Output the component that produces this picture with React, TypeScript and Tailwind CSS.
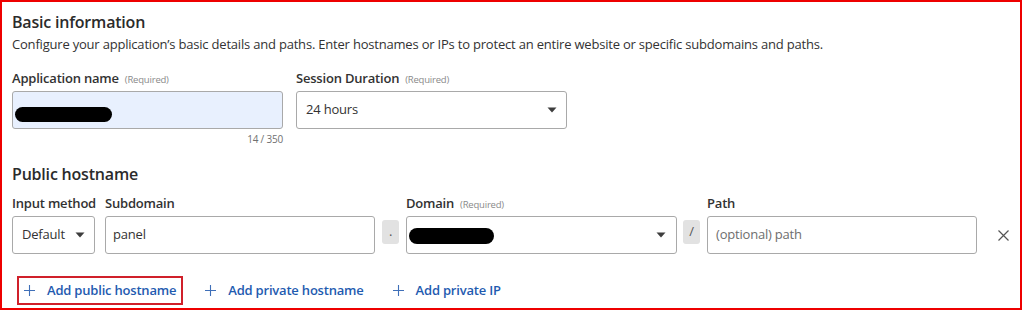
import React from "react";

const Caret = () => (
  <svg width="10" height="6" viewBox="0 0 10 6" className="shrink-0">
    <path d="M0.5 0.5 H9.5 L5 5.5 Z" fill="#3d3d3d" />
  </svg>
);

const Plus = () => (
  <svg width="11" height="11" viewBox="0 0 11 11" className="shrink-0">
    <path d="M5.5 0 V11 M0 5.5 H11" stroke="#3f6fb8" strokeWidth="1.1" />
  </svg>
);

const Label = ({ text, required }: { text: string; required?: boolean }) => (
  <div className="flex h-[22px] items-baseline gap-[6px] whitespace-nowrap text-[13px] font-semibold text-[#323232]">
    <span>{text}</span>
    {required && <span className="text-[9.5px] font-normal text-[#8a8a8a]">(Required)</span>}
  </div>
);

const Redacted = ({ w, h }: { w: number; h: number }) => (
  <div className="rounded-full bg-black" style={{ width: w, height: h }} />
);

const Joiner = ({ ch }: { ch: string }) => (
  <div className="mb-[10px] flex h-[24px] w-[17px] items-center justify-center rounded-[3px] bg-[#e2e2e2] text-[13px] text-[#555]">
    {ch}
  </div>
);

const AddLink = ({ text, boxed }: { text: string; boxed?: boolean }) => (
  <div
    className={
      boxed
        ? "flex h-[29px] items-center gap-[12px] border-2 border-[#d0202a] px-[5px]"
        : "flex h-[29px] items-center gap-[12px] px-[7px]"
    }
  >
    <Plus />
    <span className="text-[13px] font-semibold text-[#1f5bb0]">{text}</span>
  </div>
);

export default function App() {
  return (
    <div
      className="h-[311px] w-[1024px] bg-white tracking-[-0.2px]"
      style={{ fontFamily: '"Open Sans", "Noto Sans", sans-serif' }}
    >
      <div className="h-[310px] w-[1022px] border-2 border-[#ee0000] px-[10px] pt-[8px]">
        <h2 className="text-[16px] font-semibold leading-[24px] text-[#2b2b2b]">Basic information</h2>
        <p className="mt-[1px] text-[13px] leading-[18px] text-[#333]">
          Configure your application’s basic details and paths. Enter hostnames or IPs to protect an entire website or specific subdomains and paths.
        </p>

        <div className="mt-[16px] flex gap-[13px]">
          <div className="w-[271px]">
            <Label text="Application name" required />
            <div className="flex h-[38px] items-center rounded-[3px] border border-[#a9a9a9] bg-[#e8f0fe] px-[2px] pt-[8px]">
              <Redacted w={97} h={15} />
            </div>
            <div className="mt-[3px] text-right text-[10px] text-[#707070]">14 / 350</div>
          </div>
          <div className="w-[271px]">
            <Label text="Session Duration" required />
            <div className="flex h-[38px] items-center justify-between rounded-[3px] border border-[#a9a9a9] bg-white pl-[9px] pr-[9px]">
              <span className="text-[13px] text-[#333]">24 hours</span>
              <Caret />
            </div>
          </div>
        </div>

        <h2 className="mt-[15px] text-[16px] font-semibold leading-[24px] text-[#2b2b2b]">Public hostname</h2>

        <div className="mt-[8px] flex items-end">
          <div className="w-[83px] shrink-0">
            <Label text="Input method" />
            <div className="flex h-[38px] items-center justify-between rounded-[3px] border border-[#a9a9a9] pl-[9px] pr-[9px]">
              <span className="text-[13px] text-[#333]">Default</span>
              <Caret />
            </div>
          </div>
          <div className="ml-[10px] w-[270px] shrink-0">
            <Label text="Subdomain" />
            <div className="flex h-[38px] items-center rounded-[3px] border border-[#a9a9a9] px-[7px]">
              <span className="text-[13px] text-[#333]">panel</span>
            </div>
          </div>
          <div className="ml-[7px] shrink-0">
            <Joiner ch="." />
          </div>
          <div className="ml-[7px] w-[271px] shrink-0">
            <Label text="Domain" required />
            <div className="flex h-[38px] items-center justify-between rounded-[3px] border border-[#a9a9a9] pl-[2px] pr-[10px]">
              <div className="pt-[1px]">
                <Redacted w={85} h={16} />
              </div>
              <Caret />
            </div>
          </div>
          <div className="ml-[6px] shrink-0">
            <Joiner ch="/" />
          </div>
          <div className="ml-[7px] w-[270px] shrink-0">
            <Label text="Path" />
            <div className="flex h-[38px] items-center rounded-[3px] border border-[#a9a9a9] px-[8px]">
              <span className="text-[13px] text-[#6e6e6e]">(optional) path</span>
            </div>
          </div>
          <div className="ml-[21px] flex h-[38px] shrink-0 items-center">
            <svg width="11" height="11" viewBox="0 0 11 11">
              <path d="M0.5 0.5 L10.5 10.5 M10.5 0.5 L0.5 10.5" stroke="#555" strokeWidth="1.2" />
            </svg>
          </div>
        </div>

        <div className="mt-[22px] flex items-center gap-[15px] pl-[5px]">
          <AddLink text="Add public hostname" boxed />
          <AddLink text="Add private hostname" />
          <AddLink text="Add private IP" />
        </div>
      </div>
    </div>
  );
}
